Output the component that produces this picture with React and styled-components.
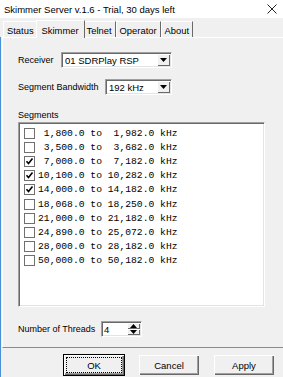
import styled, { createGlobalStyle } from "styled-components";

const GlobalStyle = createGlobalStyle`
  html, body {
    margin: 0;
    padding: 0;
    background: #f0f0f0;
    overflow: hidden;
  }
  #root {
    width: 283px;
    height: 377px;
  }
`;

const TABS = ["Status", "Skimmer", "Telnet", "Operator", "About"];

const SEGMENTS = [
  [" 1,800.0", " 1,982.0", false],
  [" 3,500.0", " 3,682.0", false],
  [" 7,000.0", " 7,182.0", true],
  ["10,100.0", "10,282.0", true],
  ["14,000.0", "14,182.0", true],
  ["18,068.0", "18,250.0", false],
  ["21,000.0", "21,182.0", false],
  ["24,890.0", "25,072.0", false],
  ["28,000.0", "28,182.0", false],
  ["50,000.0", "50,182.0", false],
];

const DownArrow = () => (
  <svg width="7" height="4" viewBox="0 0 7 4">
    <path d="M0 0h7L3.5 4z" fill="#000" />
  </svg>
);

const Combo = ({ value, width }) => (
  <SC.Combo $w={width}>
    <SC.ComboValue>{value}</SC.ComboValue>
    <SC.ComboButton>
      <DownArrow />
    </SC.ComboButton>
  </SC.Combo>
);

const Check = ({ checked }) => (
  <SC.Check>
    {checked && (
      <svg width="9" height="9" viewBox="0 0 9 9">
        <path d="M1.5 4.3l2 2.2 4-5" fill="none" stroke="#000" strokeWidth="1.6" />
      </svg>
    )}
  </SC.Check>
);

export default function App() {
  return (
    <>
      <GlobalStyle />
      <SC.Window>
        <SC.TitleBar>
          <span>Skimmer Server v.1.6 - Trial, 30 days left</span>
          <svg width="10" height="10" viewBox="0 0 10 10">
            <path d="M0.5 0.5l9 9M9.5 0.5l-9 9" stroke="#222" strokeWidth="1" />
          </svg>
        </SC.TitleBar>
        <SC.TabStrip>
          {TABS.map((t) => (
            <SC.Tab key={t} $active={t === "Skimmer"}>
              {t}
            </SC.Tab>
          ))}
        </SC.TabStrip>
        <SC.Body>
          <SC.Panel>
            <SC.Field>
              <SC.Label $w={43}>Receiver</SC.Label>
              <Combo value="01 SDRPlay RSP" width={111} />
            </SC.Field>
            <SC.Field $gap={11}>
              <SC.Label $w={87}>Segment Bandwidth</SC.Label>
              <Combo value="192 kHz" width={67} />
            </SC.Field>
            <SC.SectionLabel>Segments</SC.SectionLabel>
            <SC.List>
              {SEGMENTS.map(([from, to, on]) => (
                <SC.Row key={from}>
                  <Check checked={on} />
                  <SC.Mono>{`${from} to ${to} kHz`}</SC.Mono>
                </SC.Row>
              ))}
            </SC.List>
            <SC.Field $gap={14}>
              <SC.Label $w={83}>Number of Threads</SC.Label>
              <SC.Spin>
                <SC.SpinValue>4</SC.SpinValue>
                <SC.SpinButtons>
                  <SC.SpinHalf>
                    <svg width="7" height="4" viewBox="0 0 7 4">
                      <path d="M0 4h7L3.5 0z" fill="#000" />
                    </svg>
                  </SC.SpinHalf>
                  <SC.SpinHalf>
                    <DownArrow />
                  </SC.SpinHalf>
                </SC.SpinButtons>
              </SC.Spin>
            </SC.Field>
          </SC.Panel>
          <SC.ButtonRow>
            <SC.Button $default>
              <SC.Focus>OK</SC.Focus>
            </SC.Button>
            <SC.Button>Cancel</SC.Button>
            <SC.Button>Apply</SC.Button>
          </SC.ButtonRow>
        </SC.Body>
      </SC.Window>
    </>
  );
}

const SC = {
  Window: styled.div`
    width: 283px;
    height: 377px;
    display: flex;
    flex-direction: column;
    overflow: hidden;
    font-family: "Liberation Sans", Arial, sans-serif;
    font-size: 9px;
    color: #000;
    background: #f0f0f0;
  `,
  TitleBar: styled.div`
    height: 18px;
    flex: none;
    display: flex;
    align-items: center;
    justify-content: space-between;
    padding: 0 6px 0 4px;
    background: #fff;
    font-size: 9.5px;
    color: #000;
  `,
  TabStrip: styled.div`
    height: 19px;
    flex: none;
    display: flex;
    align-items: flex-end;
    padding-left: 3px;
  `,
  Tab: styled.div`
    position: relative;
    height: ${(p) => (p.$active ? 18 : 16)}px;
    margin: 0 ${(p) => (p.$active ? -2 : 0)}px;
    margin-bottom: ${(p) => (p.$active ? -1 : 0)}px;
    padding: 1px ${(p) => (p.$active ? 5 : 3)}px 0;
    display: flex;
    align-items: center;
    box-sizing: border-box;
    border-top: 1px solid #fff;
    border-left: 1px solid #fff;
    border-right: 1px solid #696969;
    background: #f0f0f0;
    font-size: 9.4px;
    z-index: ${(p) => (p.$active ? 2 : 1)};
  `,
  Body: styled.div`
    flex: 1;
    display: flex;
    flex-direction: column;
    border-left: 1px solid #4a90d9;
  `,
  Panel: styled.div`
    width: 300px;
    margin-left: 1px;
    padding: 14px 0 10px 15px;
    border-top: 1px solid #fff;
    border-left: 1px solid #fff;
    border-bottom: 1px solid #8a8a8a;
    display: flex;
    flex-direction: column;
  `,
  Field: styled.div`
    display: flex;
    align-items: center;
    height: 16px;
    margin-top: ${(p) => p.$gap || 0}px;
  `,
  Label: styled.span`
    width: ${(p) => p.$w}px;
    flex: none;
    white-space: nowrap;
  `,
  Combo: styled.div`
    width: ${(p) => p.$w}px;
    height: 16px;
    box-sizing: border-box;
    display: flex;
    align-items: stretch;
    background: #fff;
    border: 1px solid;
    border-color: #a0a0a0 #fff #fff #a0a0a0;
    box-shadow: inset 1px 1px #696969, inset -1px -1px #e3e3e3;
  `,
  ComboValue: styled.span`
    flex: 1;
    display: flex;
    align-items: center;
    padding-left: 3px;
    font-size: 9.5px;
  `,
  ComboButton: styled.span`
    width: 13px;
    margin: 1px 1px 1px 0;
    display: flex;
    align-items: center;
    justify-content: center;
    background: #f0f0f0;
    box-shadow: inset 1px 1px #fff, inset -1px -1px #696969;
  `,
  SectionLabel: styled.div`
    margin-top: 14px;
    line-height: 12px;
  `,
  List: styled.div`
    width: 247px;
    height: 185px;
    margin-top: 1px;
    box-sizing: border-box;
    padding: 3px 0 0 5px;
    background: #fff;
    border: 1px solid;
    border-color: #a0a0a0 #fff #fff #a0a0a0;
    box-shadow: inset 1px 1px #696969, inset -1px -1px #e3e3e3;
  `,
  Row: styled.div`
    height: 14.2px;
    display: flex;
    align-items: center;
    gap: 3px;
  `,
  Check: styled.span`
    width: 11px;
    height: 11px;
    box-sizing: border-box;
    flex: none;
    border: 1px solid #707070;
    background: #fff;
    display: flex;
    align-items: center;
    justify-content: center;
  `,
  Mono: styled.span`
    font-family: "Liberation Mono", "Courier New", monospace;
    font-size: 9.7px;
    white-space: pre;
    color: #000;
  `,
  Spin: styled.div`
    width: 41px;
    height: 16px;
    box-sizing: border-box;
    display: flex;
    background: #fff;
    border: 1px solid;
    border-color: #a0a0a0 #fff #fff #a0a0a0;
    box-shadow: inset 1px 1px #696969, inset -1px -1px #e3e3e3;
  `,
  SpinValue: styled.span`
    flex: 1;
    display: flex;
    align-items: center;
    padding-left: 2px;
    font-size: 9.5px;
  `,
  SpinButtons: styled.span`
    width: 13px;
    margin: 1px 1px 1px 0;
    display: flex;
    flex-direction: column;
  `,
  SpinHalf: styled.span`
    flex: 1;
    display: flex;
    align-items: center;
    justify-content: center;
    background: #f0f0f0;
    box-shadow: inset 1px 1px #fff, inset -1px -1px #696969;
  `,
  ButtonRow: styled.div`
    display: flex;
    justify-content: flex-end;
    gap: 13px;
    padding: 6px 8px 0 0;
  `,
  Button: styled.div`
    width: 62px;
    height: 22px;
    box-sizing: border-box;
    display: flex;
    align-items: center;
    justify-content: center;
    padding: 2px;
    background: #f0f0f0;
    border: 1px solid ${(p) => (p.$default ? "#000" : "transparent")};
    box-shadow: inset 1px 1px #fff, inset -1px -1px #696969,
      inset -2px -2px #a0a0a0;
    font-size: 9.5px;
  `,
  Focus: styled.span`
    align-self: stretch;
    flex: 1;
    display: flex;
    align-items: center;
    justify-content: center;
    border: 1px dotted #000;
  `,
};
